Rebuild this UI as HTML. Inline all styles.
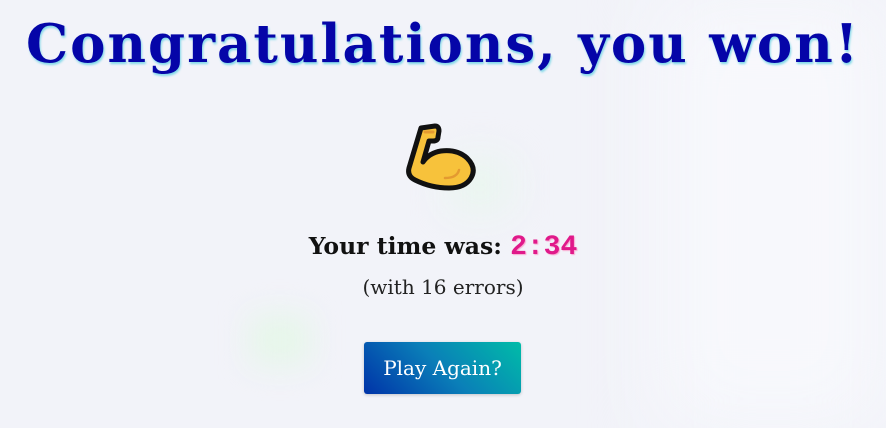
<!DOCTYPE html>
<html><head><meta charset="utf-8"><style>
html,body{margin:0;width:886px;height:428px;overflow:hidden;background:#f2f3f9;}
body{position:relative;font-family:"DejaVu Serif","Liberation Serif",serif;}
.bg1{position:absolute;left:450px;top:160px;width:60px;height:50px;background:#e9f6ee;filter:blur(20px);}
.bg2{position:absolute;left:250px;top:315px;width:60px;height:50px;background:#e6f6e9;filter:blur(15px);}
.bg3{position:absolute;left:660px;top:0;width:226px;height:428px;background:#f7f8fc;filter:blur(40px);}
h1{position:absolute;left:0;width:886px;top:13px;margin:0;text-align:center;font-size:53px;font-weight:bold;color:#0505a8;text-shadow:1px 2px 2px #7fd8e8;letter-spacing:2px;white-space:nowrap;}
.t{position:absolute;left:0;width:886px;top:232px;text-align:center;font-size:23.5px;font-weight:bold;color:#111;}
.t span{font-family:"Liberation Mono",monospace;color:#e0198a;font-size:28px;text-shadow:1px 1px 1px #f9a8cf;}
.e{position:absolute;left:0;width:886px;top:275px;text-align:center;font-family:"DejaVu Serif",serif;color:#222;font-size:20px;}
.b{position:absolute;left:364px;top:342px;width:157px;height:52px;border-radius:3px;background:linear-gradient(45deg,#0033a8,#0a7fb8 50%,#00bca8);color:#fff;font-family:"DejaVu Serif",serif;font-size:20px;text-align:center;line-height:52px;box-shadow:0 1px 3px rgba(0,0,0,.2);}
svg{position:absolute;left:405px;top:122px;}
</style></head><body>
<div class="bg3"></div><div class="bg1"></div><div class="bg2"></div>
<h1>Congratulations, you won!</h1>
<svg width="74" height="72" viewBox="0 0 74 72">
<path d="M16 6 L30 4 Q34 4 34 9 L33 15 Q33 19 28 19 L24 19 L18 40 Q24 31 36 29 Q52 27 62 36 Q72 46 66 56 Q60 66 44 66 Q26 66 10 58 Q2 54 4 46 Z" fill="#f7c23b" stroke="#111" stroke-width="5" stroke-linejoin="round"/>
<path d="M20 10 L28 10" stroke="#e49a30" stroke-width="3" stroke-linecap="round"/>
<path d="M40 56 Q52 56 54 48" stroke="#e49a30" stroke-width="2.5" fill="none" stroke-linecap="round"/>
</svg>
<div class="t">Your time was: <span>2:34</span></div>
<div class="e">(with 16 errors)</div>
<div class="b">Play Again?</div>
</body></html>
